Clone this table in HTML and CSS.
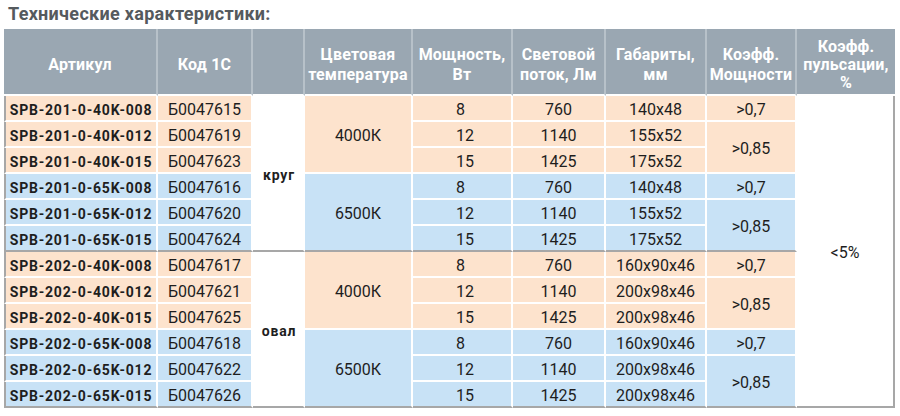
FILE: index.html
```html
<!DOCTYPE html>
<html lang="ru">
<head>
<meta charset="utf-8">
<link rel="stylesheet" href="styles.css">
</head>
<body>
<div class="page">
  <h1 class="title">Технические характеристики:</h1>
  <table class="spec">
    <colgroup>
      <col class="c-art"><col class="c-code"><col class="c-shape"><col class="c-temp"><col class="c-pow"><col class="c-flux"><col class="c-dim"><col class="c-kp"><col class="c-pulse">
    </colgroup>
    <thead>
      <tr class="head">
        <th>Артикул</th>
        <th>Код 1С</th>
        <th></th>
        <th>Цветовая<br>температура</th>
        <th>Мощность,<br>Вт</th>
        <th>Световой<br>поток, Лм</th>
        <th>Габариты,<br>мм</th>
        <th>Коэфф.<br>Мощности</th>
        <th class="three">Коэфф.<br>пульсации,<br>%</th>
      </tr>
    </thead>
    <tbody>
      <tr class="warm">
        <td class="art">SPB-201-0-40K-008</td><td class="code">Б0047615</td>
        <td class="shape sep" rowspan="6">круг</td>
        <td class="temp" rowspan="3">4000К</td>
        <td class="pow">8</td><td>760</td><td>140x48</td><td>&gt;0,7</td>
        <td class="pulse" rowspan="12">&lt;5%</td>
      </tr>
      <tr class="warm">
        <td class="art">SPB-201-0-40K-012</td><td class="code">Б0047619</td>
        <td class="pow">12</td><td>1140</td><td>155x52</td><td rowspan="2">&gt;0,85</td>
      </tr>
      <tr class="warm">
        <td class="art">SPB-201-0-40K-015</td><td class="code">Б0047623</td>
        <td class="pow">15</td><td>1425</td><td>175x52</td>
      </tr>
      <tr class="cold">
        <td class="art">SPB-201-0-65K-008</td><td class="code">Б0047616</td>
        <td class="temp sep" rowspan="3">6500К</td>
        <td class="pow">8</td><td>760</td><td>140x48</td><td>&gt;0,7</td>
      </tr>
      <tr class="cold">
        <td class="art">SPB-201-0-65K-012</td><td class="code">Б0047620</td>
        <td class="pow">12</td><td>1140</td><td>155x52</td><td class="sep" rowspan="2">&gt;0,85</td>
      </tr>
      <tr class="cold last-of-group">
        <td class="art">SPB-201-0-65K-015</td><td class="code">Б0047624</td>
        <td class="pow">15</td><td>1425</td><td>175x52</td>
      </tr>
      <tr class="warm">
        <td class="art">SPB-202-0-40K-008</td><td class="code">Б0047617</td>
        <td class="shape sep" rowspan="6">овал</td>
        <td class="temp" rowspan="3">4000К</td>
        <td class="pow">8</td><td>760</td><td>160x90x46</td><td>&gt;0,7</td>
      </tr>
      <tr class="warm">
        <td class="art">SPB-202-0-40K-012</td><td class="code">Б0047621</td>
        <td class="pow">12</td><td>1140</td><td>200x98x46</td><td rowspan="2">&gt;0,85</td>
      </tr>
      <tr class="warm">
        <td class="art">SPB-202-0-40K-015</td><td class="code">Б0047625</td>
        <td class="pow">15</td><td>1425</td><td>200x98x46</td>
      </tr>
      <tr class="cold">
        <td class="art">SPB-202-0-65K-008</td><td class="code">Б0047618</td>
        <td class="temp sep" rowspan="3">6500К</td>
        <td class="pow">8</td><td>760</td><td>160x90x46</td><td>&gt;0,7</td>
      </tr>
      <tr class="cold">
        <td class="art">SPB-202-0-65K-012</td><td class="code">Б0047622</td>
        <td class="pow">12</td><td>1140</td><td>200x98x46</td><td class="sep" rowspan="2">&gt;0,85</td>
      </tr>
      <tr class="cold last-of-group">
        <td class="art">SPB-202-0-65K-015</td><td class="code">Б0047626</td>
        <td class="pow">15</td><td>1425</td><td>200x98x46</td>
      </tr>
    </tbody>
  </table>
</div>
</body>
</html>
```

FILE: styles.css
```css
html, body {
  margin: 0;
  padding: 0;
  background: #ffffff;
}

.page {
  width: 900px;
  height: 416px;
  overflow: hidden;
  font-family: Roboto, "Liberation Sans", sans-serif;
}

.title {
  margin: 0;
  padding: 3px 0 4px 8px;
  font-size: 18px;
  line-height: 22px;
  font-weight: 700;
  color: #555a5e;
  letter-spacing: 0.3px;
}

.spec {
  margin-left: 4px;
  width: 891px;
  table-layout: fixed;
  border-collapse: separate;
  border-spacing: 0;
}

.c-art { width: 154px; }
.c-code { width: 95px; }
.c-shape { width: 52px; }
.c-temp { width: 108px; }
.c-pow { width: 100px; }
.c-flux { width: 93px; }
.c-dim { width: 101px; }
.c-kp { width: 90px; }
.c-pulse { width: 98px; }

.head {
  height: 67px;
}

.head th {
  background: #9aa7b2;
  color: #ffffff;
  font-size: 16px;
  font-weight: 700;
  line-height: 20px;
  letter-spacing: 0.2px;
  text-align: center;
  vertical-align: middle;
  padding: 7px 0 0;
  border-right: 2px solid #b7c1c9;
  border-bottom: 2px solid #ffffff;
  white-space: nowrap;
}

.head th:last-child {
  border-right: none;
}

.head th.three {
  line-height: 18px;
}

tbody tr {
  height: 26px;
}

tbody td {
  font-size: 16px;
  line-height: 20px;
  color: #1e1e1e;
  text-align: center;
  vertical-align: middle;
  padding: 4px 0 0;
  border-right: 2px solid #ffffff;
  border-bottom: 2px solid #ffffff;
  white-space: nowrap;
}

.warm td { background: #fde3cd; }
.cold td { background: #c8e2f6; }

tbody td.art {
  font-size: 14px;
  font-weight: 700;
  letter-spacing: 0.8px;
  border-left: 2px solid #a7a7a7;
}

tbody td.pow {
  text-align: left;
  padding-left: 43px;
}

tbody td.shape,
tbody td.pulse {
  background: #ffffff;
}

tbody td.shape {
  font-size: 14px;
  font-weight: 700;
  letter-spacing: 0.8px;
  padding-left: 2px;
}

tbody td.pulse {
  border-right: 2px solid #a7a7a7;
  border-bottom: 2px solid #a7a7a7;
}

.last-of-group td,
tbody td.sep {
  border-bottom: 2px solid #a7a7a7;
}
```
